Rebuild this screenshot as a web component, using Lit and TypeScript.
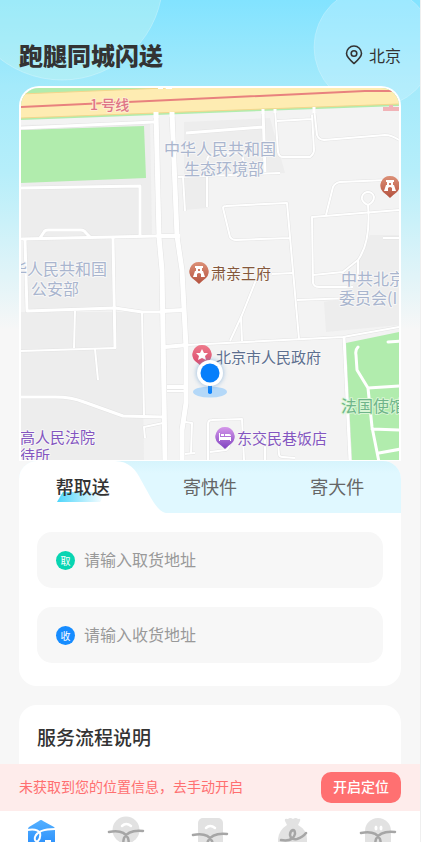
import { LitElement, html, svg, css } from "lit";
import { customElement, state } from "lit/decorators.js";

/** Streets: path data and the width of the white carriageway. */
const streets: [string, number][] = [
  ["M21 128L154 122", 3],
  ["M156 112L159 237L162 270L165 460", 5],
  ["M172 112L177 236L182 270L186 347V403L182 430V460", 5],
  ["M158 236H180", 4],
  ["M163 311L184 310", 4],
  ["M165 347L187 345", 4],
  ["M187 345L343 337L399 327", 2],
  ["M167 387H185", 4],
  ["M167 391H184", 2],
  ["M21 188L140 186V235", 3],
  ["M21 239L158 236", 3],
  ["M40 238L44 232Q45 230 48 230H81Q84 230 86 233L90 237", 3],
  ["M25 240L27 311L115 308L142 312H162", 3],
  ["M113 238L115 348", 3],
  ["M21 351L116 348", 2],
  ["M75 311L74 348", 2],
  ["M95 349L98 380", 2],
  ["M142 312L144 415", 2],
  ["M21 397H55Q72 397 84 402L123 416L164 417", 3],
  ["M163 423L144 427L145 438", 2],
  ["M185 422L192 423L191 453M185 454L195 453", 2],
  ["M186 133L263 127M263 109L265 172", 3],
  ["M178 177L280 173", 2],
  ["M183 177L185 211M207 177V207M207 160Q208 154 214 154L242 153L245 170", 2],
  ["M275 109L278 152Q279 157 283 157L310 157Q314 154 314 150L312 115M277 121L312 119", 2],
  ["M314 108L317 135Q319 140 324 140L385 135Q392 135 399 140", 2],
  ["M326 215L333 187Q335 183 340 182L387 180", 2],
  ["M368 205Q374 202 374 197A6 6 0 1 0 362 199Q363 203 368 205Q371 242 358 260L343 272L313 275", 2],
  ["M358 260V282", 2],
  ["M399 210L312 217L313 283Q314 287 319 287H353", 2],
  ["M223 208Q223 206 226 206L287 203L299 339M223 208L230 237Q232 240 236 240L290 238", 2],
  ["M272 274L293 273M297 300L352 298M383 238H399", 2],
  ["M258 275L242 315L230 341M241 317L242 341", 2],
  ["M344 337L350 460", 3],
  ["M208 460V424Q208 420 212 420L242 419L244 460", 2],
  ["M210 452L226 450Q230 449 230 437M265 440V460M278 443L279 454Q279 457 283 457L295 458", 2],
];

const blocks = [
  "M21 125L150 122L152 235L21 238Z",
  "M27 240L112 239L115 308L27 311Z",
  "M21 312L142 312L144 460L21 460Z",
  "M184 122L270 118L285 173L207 176V208L184 210Z",
  "M370 235H399V325L326 332L324 302L350 298L358 262Z",
];

const tower = svg`<path fill="#fff" d="M-4 -6H4V-4H3V-1H4L6 5H2V2Q0 0 -2 2V5H-6L-4 -1H-3V-4H-4ZM-1 -3V-1H1V-3Z"/>`;
const bed = svg`<path fill="#fff" d="M-6 -4H-5V0H6V4H5V3H-5V4H-6ZM-4 -3H-1V-1H-4ZM0 -3H4Q6 -3 6 -1H0Z"/>`;
const star = svg`<path fill="#fff" d="M0 -6L2 -2L6 -2L3 1L4 5L0 3L-4 5L-3 1L-6 -2L-2 -2Z"/>`;

const pin = (x: number, y: number, fill: string, glyph: unknown) => svg`
  <g transform="translate(${x} ${y})">
    <path d="M0 -10A9.500 9.500 0 0 1 7 6Q3 9 0 12Q-3 9 -7 6A9.500 9.500 0 0 1 0 -10Z" fill=${fill}/>
    ${glyph}
  </g>`;

@customElement("city-map")
export class CityMap extends LitElement {
  static styles = css`
    :host { display: block; }
    .map { display: block; width: 100%; height: auto; background: #f3f3f3; }
    .label {
      font-family: "Noto Sans CJK SC", sans-serif;
      font-size: 16px;
      paint-order: stroke;
      stroke: #f7f7f7;
      stroke-width: 2px;
      stroke-linejoin: round;
    }
    .small { font-size: 15px; }
    .line { font-size: 14px; font-weight: 500; fill: #df7587; stroke: #fdeed0; }
    .office { fill: #a9b5ce; }
    .sight { fill: #85583c; }
    .gov { fill: #5d6f8f; }
    .hotel { fill: #8456c0; }
    .embassy { fill: #6fb58a; stroke: #d9f5d4; }
  `;

  render() {
    return html`
      <svg class="map" viewBox="21 88 378 372" role="img" aria-label="北京地图">
        <defs>
          <linearGradient id="brown" x2="0" y2="1"><stop stop-color="#dc9077"/><stop offset="1" stop-color="#b4523f"/></linearGradient>
          <linearGradient id="rose" x2="0" y2="1"><stop stop-color="#ee7a8b"/><stop offset="1" stop-color="#d84468"/></linearGradient>
          <linearGradient id="violet" x2="0" y2="1"><stop stop-color="#d597ea"/><stop offset="1" stop-color="#7f42c0"/></linearGradient>
          <filter id="glow" x="-50%" y="-50%" width="200%" height="200%"><feGaussianBlur stdDeviation="2"/></filter>
        </defs>
        <rect x="21" y="88" width="378" height="372" fill="#f3f3f3"/>
        ${blocks.map((d) => svg`<path d=${d} fill="#ededed"/>`)}
        <path d="M21 130L144 126L146 178L21 183Z" fill="#b1ecad"/>
        <g fill="none" stroke="#e3e3e3" stroke-linejoin="round">
          ${streets.map(([d, w]) => svg`<path d=${d} stroke-width=${w + 1}/>`)}
        </g>
        <g fill="none" stroke="#fff" stroke-linejoin="round">
          ${streets.map(([d, w]) => svg`<path d=${d} stroke-width=${w}/>`)}
        </g>
        <path d="M346 343L399 332V460H352Z" fill="#b1ecad"/>
        <g fill="none" stroke="#fff" stroke-width="3" stroke-linejoin="round" stroke-linecap="round">
          <path d="M358 347Q355 350 356 355L357 370L368 388L372 427L379 462M368 388L401 386M372 429L401 430M379 453L401 449M388 342L401 341"/>
        </g>
        <path d="M21 88H399V106L21 120Z" fill="#b1ecad"/>
        <path d="M21 94L165 88H399V104L21 118Z" fill="#feecb2"/>
        <path d="M21 94L165 88M21 118L399 104" fill="none" stroke="#f3d68c"/>
        <path d="M158 88H163V89H158ZM166 88H172V89H166Z" fill="#fff"/>
        <path d="M156 118V112M172 117V112" stroke="#fff" stroke-width="5"/>
        <path d="M263 114V109M275 113V109M314 113V107" stroke="#fff" stroke-width="3"/>
        <path d="M21 107L365 91H399" fill="none" stroke="#e8817e" stroke-width="2"/>
        <path d="M383 107H389V105H393V107H399V111H383Z" fill="#f1b3b7"/>

        <text class="label line" x="90" y="110">1 号线</text>
        <text class="label office" x="220" y="155" text-anchor="middle">中华人民共和国</text>
        <text class="label office" x="224" y="175" text-anchor="middle">生态环境部</text>
        <text class="label office" x="107" y="275" text-anchor="end">华人民共和国</text>
        <text class="label office" x="55" y="295" text-anchor="middle">公安部</text>
        <text class="label office" x="341" y="285">中共北京</text>
        <text class="label office" x="339" y="304">委员会(I</text>
        <text class="label small sight" x="211" y="279">肃亲王府</text>
        <text class="label small gov" x="216" y="363">北京市人民政府</text>
        <text class="label small hotel" x="237" y="444">东交民巷饭店</text>
        <text class="label small hotel" x="20" y="443">高人民法院</text>
        <text class="label small hotel" x="20" y="461">待所</text>
        <text class="label embassy" x="341" y="412">法国使馆</text>

        ${pin(199, 272, "url(#brown)", tower)}
        ${pin(390, 186, "url(#brown)", tower)}
        ${pin(202, 355, "url(#rose)", star)}
        ${pin(225, 437, "url(#violet)", bed)}

        <ellipse cx="210" cy="392" rx="17" ry="5.5" fill="#b4d8f8"/>
        <path d="M208 380H212V393Q210 395 208 393Z" fill="#0a80fb"/>
        <circle cx="210" cy="373" r="14" fill="#6a9fd0" opacity=".5" filter="url(#glow)"/>
        <circle cx="210" cy="373" r="13" fill="#fff"/>
        <circle cx="210" cy="373" r="9.5" fill="#067ffb"/>
      </svg>`;
  }
}

const navItems = [
  {
    label: "首页",
    icon: svg`
      <linearGradient id="home" x2="0" y2="1"><stop stop-color="#54b0ff"/><stop offset="1" stop-color="#2389fb"/></linearGradient>
      <path fill="url(#home)" d="M7 14Q7 13 8 12L18 6Q20 4 22 6L33 12Q34 13 34 14V36H7Z"/>
      <path fill="none" stroke="#fff" stroke-width="2" stroke-linecap="round" d="M6 15Q16 13 19 18Q20 23 17 26Q13 27 14 22Q17 14 34 14"/>
      <path stroke="#fff" stroke-width="2" d="M24 26H30"/>`,
  },
  {
    label: "附近",
    icon: svg`
      <circle cx="21" cy="15" r="13.5" fill="#e2e2e2"/>
      <path fill="none" stroke="#fff" stroke-width="2.5" stroke-linecap="round" d="M17 11Q21 7 26 11"/>
      <path fill="none" stroke="#a6a6a6" stroke-width="2.5" stroke-linecap="round" d="M4 17C14 15 20 17 23 23Q25 30 21 30Q17 30 19 23C22 17 28 15 38 16"/>`,
  },
  {
    label: "下单",
    icon: svg`
      <rect x="9" y="3" width="25" height="30" rx="5" fill="#e2e2e2"/>
      <path fill="none" stroke="#fff" stroke-width="2.5" stroke-linecap="round" d="M17 13Q21 9 26 13"/>
      <path fill="none" stroke="#a6a6a6" stroke-width="2.5" stroke-linecap="round" d="M4 20C14 18 20 20 23 26Q25 32 21 32Q17 32 19 26C22 20 28 18 38 19"/>`,
  },
  {
    label: "钱包",
    icon: svg`
      <path fill="#e2e2e2" d="M12 6Q11 3 15 4Q17 2 20 4Q23 2 25 4Q28 3 27 6L25 10Q34 15 34 24V36H5V24Q6 15 14 10Z"/>
      <path fill="none" stroke="#a6a6a6" stroke-width="2.5" stroke-linecap="round" d="M8 25Q20 27 22 19Q22 15 20 15Q17 16 17 20Q18 25 24 24Q30 22 33 18"/>`,
  },
  {
    label: "我的",
    icon: svg`
      <path fill="#e2e2e2" d="M8 16A13 13 0 0 1 34 16V36H8Z"/>
      <ellipse cx="19" cy="13" rx="1.5" ry="2.5" fill="#fff"/><ellipse cx="24" cy="13" rx="1.5" ry="2.5" fill="#fff"/>
      <path fill="none" stroke="#a6a6a6" stroke-width="2.5" stroke-linecap="round" d="M4 18C14 16 20 18 23 24Q25 31 21 31Q17 31 19 24C22 18 28 16 38 17"/>`,
  },
];

@customElement("app-root")
export class AppRoot extends LitElement {
  static styles = css`
    :host {
      display: block;
      font-family: "Noto Sans CJK SC", sans-serif;
      color: #333;
    }
    * { box-sizing: border-box; }
    button, input { font: inherit; border: 0; padding: 0; margin: 0; background: none; color: inherit; }
    .app {
      display: flex;
      flex-direction: column;
      height: 100vh;
      background: #f7f7f7;
      border-right: 1px solid #efefef;
    }
    .content {
      position: relative;
      flex: 1;
      min-height: 0;
      overflow-y: auto;
      scrollbar-width: none;
      padding: 0 19px;
      background: linear-gradient(#82e3ff 0, #a4eafb 86px, #b5eefa 170px, #f7f7f7 330px);
    }
    .bubbles { position: absolute; top: 0; width: 200px; height: 120px; }
    .left { left: 0; }
    .right { right: 0; width: 110px; }
    .header {
      position: relative;
      display: flex;
      align-items: center;
      justify-content: space-between;
      padding: 39px 0 15px;
    }
    .brand { margin: 0; font-size: 24px; line-height: 32px; font-weight: 900; color: #333; }
    .city { display: flex; align-items: center; gap: 6px; font-size: 16px; line-height: 24px; }
    .mapbox {
      position: relative;
      border: 2px solid #fff;
      border-bottom-width: 1px;
      border-radius: 20px 20px 0 0;
      overflow: hidden;
    }
    .card { background: #fff; border-radius: 18px; overflow: hidden; margin-bottom: 19px; }
    .tabs {
      position: relative;
      display: grid;
      grid-template-columns: repeat(3, 1fr);
      height: 52px;
      background: linear-gradient(#d6f4fc, #e0f8ff 12px);
    }
    .curve { position: absolute; left: 0; top: 0; width: 147px; height: 52px; }
    .tab { position: relative; padding-bottom: 2px; font-size: 18px; line-height: 50px; color: #666; cursor: pointer; }
    .tab[aria-selected="true"] { color: #333; font-weight: 500; }
    .swoosh {
      position: absolute;
      left: 38px;
      top: 31px;
      width: 48px;
      height: 10px;
      background: linear-gradient(90deg, #4cd5fb, #fff);
      clip-path: polygon(12% 0, 100% 0, 90% 100%, 0 100%);
    }
    .name { position: relative; }
    .fields { display: grid; gap: 19px; padding: 19px 18px 23px; }
    .field {
      display: flex;
      align-items: center;
      gap: 9px;
      height: 56px;
      padding: 0 19px;
      border-radius: 15px;
      background: #f7f7f7;
    }
    .badge {
      flex: none;
      width: 19px;
      height: 19px;
      border-radius: 50%;
      font-size: 10px;
      line-height: 19px;
      text-align: center;
      color: #fff;
    }
    .pick { background: #08d5b2; }
    .drop { background: #168cff; }
    .entry { flex: 1; min-width: 0; padding-bottom: 2px; font-size: 16px; line-height: 24px; outline: none; }
    .entry::placeholder { color: #999; opacity: 1; }
    .flow { min-height: 120px; padding: 17px 18px; }
    .heading { margin: 0; font-size: 19px; line-height: 30px; font-weight: 500; }
    .notice {
      display: flex;
      align-items: center;
      justify-content: space-between;
      height: 47px;
      padding: 0 19px;
      background: #feeceb;
      color: #ff6f70;
      font-size: 14px;
    }
    .notice-text { margin: 0; padding-bottom: 3px; }
    .locate {
      height: 31px;
      padding: 0 12px 3px;
      border-radius: 10px;
      background: #ff7071;
      color: #fff;
      font-size: 14px;
      font-weight: 500;
      cursor: pointer;
    }
    .nav {
      display: grid;
      grid-template-columns: repeat(5, 1fr);
      justify-items: center;
      height: 31px;
      overflow: hidden;
      background: #fff;
    }
    .nav-link { display: block; height: 40px; padding-top: 4px; }
    .nav-icon { display: block; width: 42px; height: 36px; }
  `;

  @state() private tab = 0;

  private tabs = ["帮取送", "寄快件", "寄大件"];

  render() {
    return html`
      <div class="app">
        <main class="content">
          <svg class="bubbles left" viewBox="0 0 200 120" aria-hidden="true">
            <circle cx="62" cy="-21" r="101" fill="#c6f6f0" fill-opacity=".4" stroke="#fff" stroke-opacity=".25"/>
          </svg>
          <svg class="bubbles right" viewBox="310 0 110 120" aria-hidden="true">
            <circle cx="374" cy="47" r="60" fill="#d2f3ff" fill-opacity=".35" stroke="#fff" stroke-opacity=".2"/>
          </svg>
          <header class="header">
            <h1 class="brand">跑腿同城闪送</h1>
            <button class="city">
              <svg width="18" height="20" viewBox="0 0 18 20" fill="none" stroke="#333" stroke-width="1.6" aria-hidden="true">
                <path d="M9 18.5C5 15 1.5 12 1.5 8.500A7.500 7.500 0 0 1 16.500 8.500C16.500 12 13 15 9 18.500Z"/>
                <circle cx="9" cy="8.500" r="2.800"/>
              </svg>
              <span>北京</span>
            </button>
          </header>
          <div class="mapbox"><city-map></city-map></div>
          <section class="card">
            <div class="tabs" role="tablist">
              <svg class="curve" viewBox="0 0 147 52" aria-hidden="true">
                <path d="M0 0H96C110 0 117 9 122 19L132 37Q140 51 147 52H0Z" fill="#fff"/>
              </svg>
              ${this.tabs.map(
                (name, i) => html`
                  <button class="tab" role="tab" aria-selected=${this.tab === i ? "true" : "false"} @click=${() => (this.tab = i)}>
                    ${i === 0 ? html`<span class="swoosh"></span>` : ""}
                    <span class="name">${name}</span>
                  </button>`
              )}
            </div>
            <div class="fields">
              <label class="field">
                <span class="badge pick">取</span>
                <input class="entry" type="text" placeholder="请输入取货地址" />
              </label>
              <label class="field">
                <span class="badge drop">收</span>
                <input class="entry" type="text" placeholder="请输入收货地址" />
              </label>
            </div>
          </section>
          <section class="card flow">
            <h2 class="heading">服务流程说明</h2>
          </section>
        </main>
        <div class="notice">
          <p class="notice-text">未获取到您的位置信息，去手动开启</p>
          <button class="locate">开启定位</button>
        </div>
        <nav class="nav">
          ${navItems.map(
            (item) => html`
              <a class="nav-link" href="#" aria-label=${item.label}>
                <svg class="nav-icon" viewBox="0 0 42 36" aria-hidden="true">${item.icon}</svg>
              </a>`
          )}
        </nav>
      </div>`;
  }
}
